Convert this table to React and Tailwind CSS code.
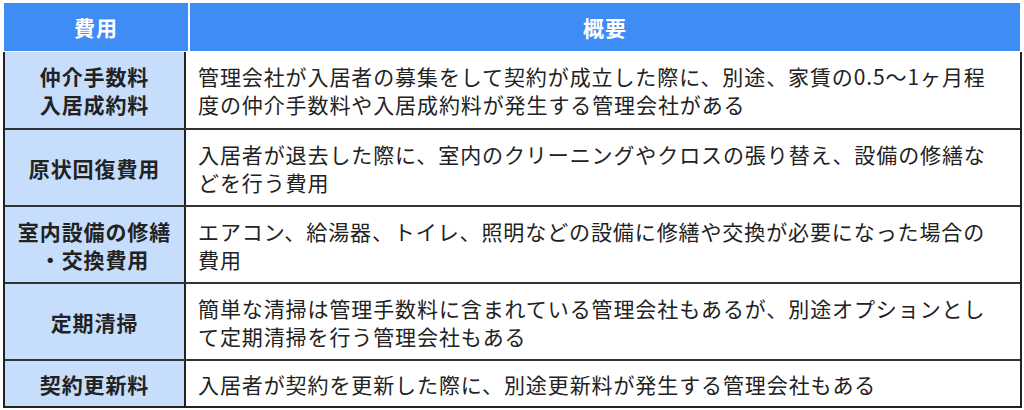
const rows = [
  {
    name: ['仲介手数料', '入居成約料'],
    desc: ['管理会社が入居者の募集をして契約が成立した際に、別途、家賃の0.5〜1ヶ月程', '度の仲介手数料や入居成約料が発生する管理会社がある'],
  },
  {
    name: ['原状回復費用'],
    desc: ['入居者が退去した際に、室内のクリーニングやクロスの張り替え、設備の修繕な', 'どを行う費用'],
  },
  {
    name: ['室内設備の修繕', '・交換費用'],
    desc: ['エアコン、給湯器、トイレ、照明などの設備に修繕や交換が必要になった場合の', '費用'],
  },
  {
    name: ['定期清掃'],
    desc: ['簡単な清掃は管理手数料に含まれている管理会社もあるが、別途オプションとし', 'て定期清掃を行う管理会社もある'],
  },
  {
    name: ['契約更新料'],
    desc: ['入居者が契約を更新した際に、別途更新料が発生する管理会社もある'],
  },
];

const heights = ['h-[76px]', 'h-[77px]', 'h-[77px]', 'h-[77px]', 'h-[47px]'];

export default function App() {
  return (
    <div
      className="w-[1024px] h-[410px] bg-white pt-[3px] pl-[3px] text-[#222] text-[21px] leading-[28px] tracking-[0.9px]"
      style={{ fontFamily: '"Noto Sans CJK JP", "Noto Sans", sans-serif' }}
    >
      <div className="w-[1019px]">
        <div className="grid grid-cols-[184px_1fr] gap-x-[2px] h-[48px] ml-[1px] mr-[2px] bg-white">
          <div className="bg-[#3f8cf5] text-white font-bold flex items-center justify-center">費用</div>
          <div className="bg-[#3f8cf5] text-white font-bold flex items-center justify-center">概要</div>
        </div>
        <div className="border-l-2 border-r-2 border-b-2 border-[#222] mt-[1px]">
          {rows.map((r, i) => (
            <div
              key={i}
              className={`grid grid-cols-[181px_1fr] ${i > 0 ? 'border-t-2 border-[#333]' : ''} ${heights[i]}`}
            >
              <div className="bg-[#c6ddfc] border-r-2 border-[#222] font-bold flex flex-col items-center justify-center text-center">
                {r.name.map((n) => (
                  <div key={n} className="whitespace-nowrap">{n}</div>
                ))}
              </div>
              <div className="pl-[12px] flex flex-col justify-center">
                {r.desc.map((d) => (
                  <div key={d} className="whitespace-nowrap">{d}</div>
                ))}
              </div>
            </div>
          ))}
        </div>
      </div>
    </div>
  );
}
